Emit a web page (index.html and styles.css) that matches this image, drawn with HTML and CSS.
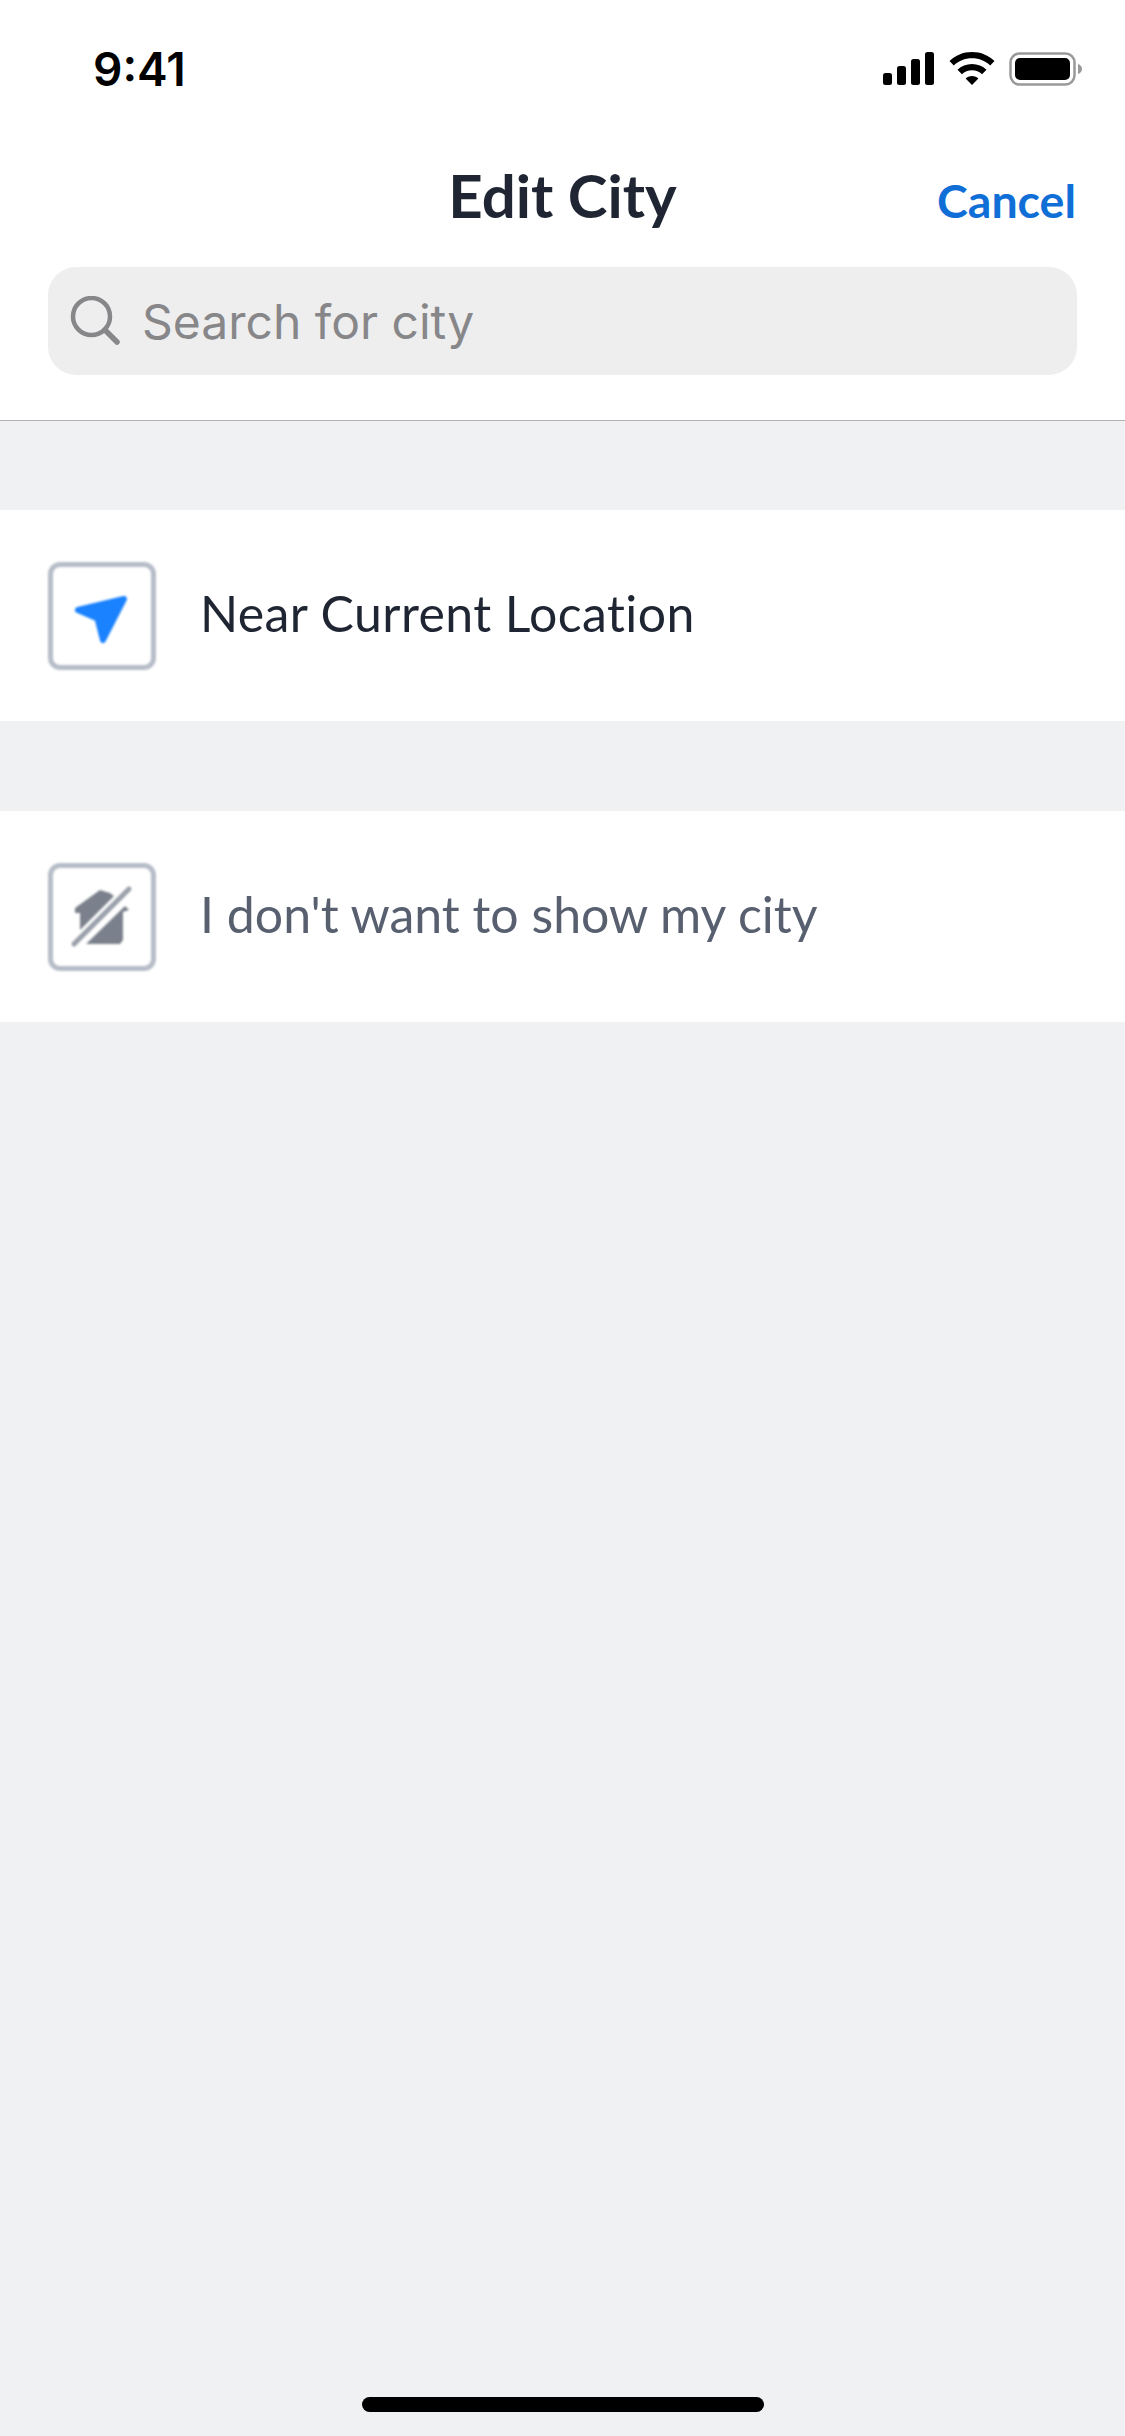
FILE: index.html
```html
<!DOCTYPE html>
<html lang="en">
<head>
<meta charset="utf-8">
<title>Edit City</title>
<link rel="stylesheet" href="styles.css">
</head>
<body>
<div class="screen">
  <header class="top">
    <div class="status">
      <span class="time">9:41</span>
      <div class="status-icons">
        <svg class="sig" width="52" height="33" viewBox="0 0 52 33"><rect x="0" y="21" width="9" height="12" rx="2.5"/><rect x="14" y="14" width="9" height="19" rx="2.5"/><rect x="28" y="7" width="9" height="26" rx="2.5"/><rect x="42" y="0" width="9" height="33" rx="2.5"/></svg>
        <svg class="wifi" width="46" height="33" viewBox="0 0 46 33"><path d="M23 0C14 0 6.500 3.400 .5 9l4.300 4.500C9.500 9 15.800 6.300 23 6.300S36.500 9 41.200 13.500L45.500 9C39.500 3.400 32 0 23 0z"/><path d="M23 12c-5.600 0-10.700 2.200-14.500 5.800l4.400 4.500c2.700-2.500 6.200-4 10.100-4s7.400 1.500 10.100 4l4.400-4.500C33.700 14.200 28.600 12 23 12z"/><path d="M23 24c-2.500 0-4.800 1-6.400 2.600L23 33l6.400-6.400C27.800 25 25.500 24 23 24z"/></svg>
        <svg class="batt" width="74" height="34" viewBox="0 0 74 34"><rect x="1.500" y="1.500" width="64" height="31" rx="9" fill="none" stroke="#999" stroke-width="2.500"/><rect x="6" y="6" width="55" height="22" rx="5"/><path d="M69 12c2.500.8 4 2.700 4 5s-1.500 4.200-4 5z" fill="#999"/></svg>
      </div>
    </div>
    <div class="nav">
      <span></span>
      <h1 class="title">Edit City</h1>
      <a class="cancel">Cancel</a>
    </div>
    <div class="search">
      <svg class="search-icon" width="50" height="50" viewBox="0 0 50 50" fill="none" stroke="#878789" stroke-width="4.500" stroke-linecap="round"><circle cx="21.500" cy="20.500" r="18.500"/><path d="M35 34l12 12" stroke-width="5.500"/></svg>
      <span class="placeholder">Search for city</span>
    </div>
  </header>

  <section class="row">
    <div class="tile">
      <svg width="98" height="98" viewBox="0 0 98 98"><path d="M25 43 L71 32 L50 73 L44.500 51.500z" fill="#1a82ff" stroke="#1a82ff" stroke-width="6" stroke-linejoin="round"/></svg>
    </div>
    <span class="label">Near Current Location</span>
  </section>

  <section class="row row-muted">
    <div class="tile">
      <svg width="98" height="98" viewBox="0 0 98 98"><path d="M22 40 L47 22 L57 25 L62 29 L27 64 L27 45 L22 45z" fill="#7b818c"/><path d="M33 76 L72 38 L76 42 L70 44 L70 72 L67 76z" fill="#7b818c"/><path d="M21 76 L76 21" stroke="#fff" stroke-width="11" fill="none"/><path d="M21 76 L76 21" stroke="#9aa0aa" stroke-width="5" stroke-linecap="round" fill="none"/></svg>
    </div>
    <span class="label">I don't want to show my city</span>
  </section>

  <div class="home-wrap"><div class="home"></div></div>
</div>
</body>
</html>
```

FILE: styles.css
```css
* { box-sizing: border-box; }
html, body { margin: 0; padding: 0; }
body { background: #f0f1f3; font-family: "Lato", "Open Sans", sans-serif; }
.screen { width: 1125px; height: 2436px; display: flex; flex-direction: column; background: #f0f1f3; }
.top { height: 421px; background: #fff; border-bottom: 1px solid #b2b2b4; padding: 0 48px; }
.status { height: 135px; display: flex; align-items: flex-start; justify-content: space-between; padding: 47px 0 0 45px; }
.time { font-family: "Inter", sans-serif; font-weight: 600; font-size: 46px; line-height: 44px; color: #000; }
.status-icons { display: flex; align-items: flex-start; gap: 14px; margin: 5px -6px 0 0; }
.status-icons svg { display: block; }
.nav { height: 60px; margin-top: 30px; display: grid; grid-template-columns: 1fr auto 1fr; align-items: center; }
.title { margin: 0; font-size: 60px; font-weight: 700; line-height: 60px; color: #1f2532; }
.cancel { justify-self: end; margin: 10px 1px 0 0; font-size: 46.500px; font-weight: 700; color: #0f6fd6; line-height: 50px; }
.search { margin-top: 42px; height: 108px; border-radius: 28px; background: #eeeeef; display: flex; align-items: center; padding: 0 0 0 22px; gap: 22px; }
.search-icon { display: block; flex: none; }
.placeholder { font-family: "Inter", sans-serif; font-size: 48px; color: #87878a; line-height: 60px; margin-top: 2px; }
.row { height: 211px; margin-top: 89px; background: #fff; display: flex; align-items: center; padding-left: 48px; gap: 44px; color: #1f2532; }
.tile { width: 108px; height: 108px; border: 5px solid #b6bdc8; border-radius: 12px; background: #fff; flex: none; filter: blur(1px); }
.tile svg { display: block; width: 98px; height: 98px; }
.label { font-family: "Lato", sans-serif; font-size: 50px; line-height: 60px; letter-spacing: .4px; margin-bottom: 6px; }
.row-muted { color: #586070; margin-top: 90px; }
.row-muted .label { letter-spacing: 0; }
.home-wrap { margin-top: auto; height: 39px; display: flex; justify-content: center; }
.home { width: 402px; height: 15px; border-radius: 8px; background: #000; }
```
